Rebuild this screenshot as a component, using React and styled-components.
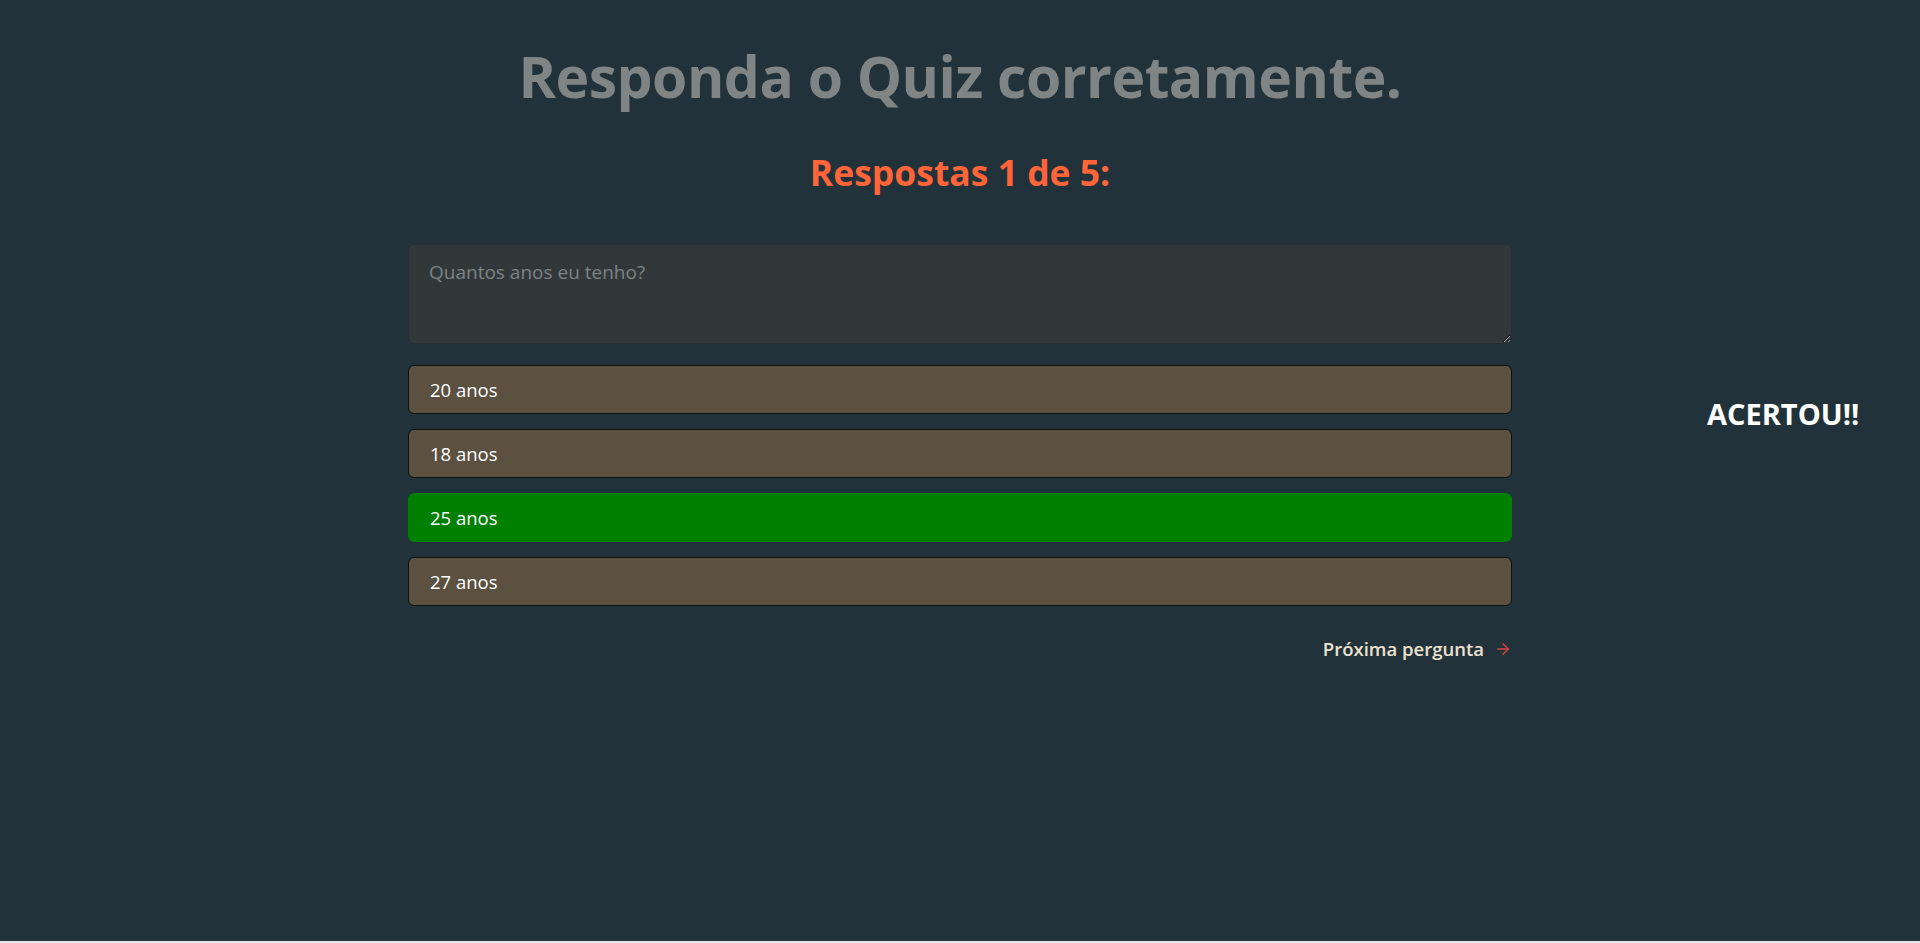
import React from "react"
import styled, { createGlobalStyle } from "styled-components"
import { ArrowRight } from "lucide-react"

const GlobalStyle = createGlobalStyle`
  html, body {
    margin: 0;
    padding: 0;
    background: #e6e6e6;
  }

  body {
    font-family: "Open Sans", "Noto Sans", sans-serif;
  }

  * {
    box-sizing: border-box;
  }
`

const StyledPage = styled.main`
  min-height: 941px;
  background: #22323b;
  display: flex;
  flex-direction: column;
  align-items: center;
  padding-top: 39px;
`

const Title = styled.h1`
  margin: 0;
  font-size: 57px;
  font-weight: 700;
  color: #7f8584;
  letter-spacing: -0.5px;
  line-height: 1.3;
`

const Subtitle = styled.h2`
  margin: 36px 0 0;
  font-size: 35.5px;
  font-weight: 700;
  color: #ff6538;
  line-height: 1.3;
`

const QuizRow = styled.section`
  width: 100%;
  display: grid;
  grid-template-columns: 1fr 1104px 1fr;
  margin-top: 49px;
`

const StyledForm = styled.form`
  grid-column: 2;
  display: flex;
  flex-direction: column;
`

const Question = styled.textarea`
  display: block;
  height: 100px;
  width: 100%;
  padding: 14px 20px;
  border: 1px solid #293033;
  border-radius: 6px;
  background: #323839;
  color: #d8d8d8;
  font-family: "Open Sans", "Noto Sans", sans-serif;
  font-size: 19px;
  outline: none;

  &::placeholder {
    color: #7c8385;
  }
`

const Answers = styled.div`
  display: flex;
  flex-direction: column;
  gap: 15px;
  margin-top: 21px;
`

const Answer = styled.button`
  height: 49px;
  width: 100%;
  padding: 0 21px;
  text-align: left;
  border: 1px solid ${({ $correct }) => ($correct ? "#008000" : "#111111")};
  border-radius: 6px;
  background: ${({ $correct }) => ($correct ? "#008000" : "#5c5040")};
  color: #ffffff;
  font-family: "Open Sans", "Noto Sans", sans-serif;
  font-size: 18.5px;
  cursor: pointer;
`

const NextButton = styled.button`
  align-self: flex-end;
  margin-top: 30px;
  display: flex;
  align-items: center;
  gap: 10px;
  padding: 0;
  border: none;
  background: none;
  color: #ece2cf;
  font-family: "Open Sans", "Noto Sans", sans-serif;
  font-size: 18.5px;
  font-weight: 600;
  cursor: pointer;

  svg {
    color: #e0413c;
  }
`

const Result = styled.h3`
  grid-column: 3;
  margin: 150px 0 0 195px;
  font-size: 29px;
  font-weight: 700;
  color: #ffffff;
`

const answers = [
  { label: "20 anos" },
  { label: "18 anos" },
  { label: "25 anos", correct: true },
  { label: "27 anos" },
]

export default function App() {
  return (
    <>
      <GlobalStyle />
      <StyledPage>
        <Title>Responda o Quiz corretamente.</Title>
        <Subtitle>Respostas 1 de 5:</Subtitle>
        <QuizRow>
          <StyledForm onSubmit={(e) => e.preventDefault()}>
            <Question placeholder="Quantos anos eu tenho?" readOnly />
            <Answers>
              {answers.map((answer) => (
                <Answer type="button" key={answer.label} $correct={answer.correct}>
                  {answer.label}
                </Answer>
              ))}
            </Answers>
            <NextButton type="button">
              Próxima pergunta
              <ArrowRight size={18} strokeWidth={1.75} />
            </NextButton>
          </StyledForm>
          <Result>ACERTOU!!</Result>
        </QuizRow>
      </StyledPage>
    </>
  )
}
